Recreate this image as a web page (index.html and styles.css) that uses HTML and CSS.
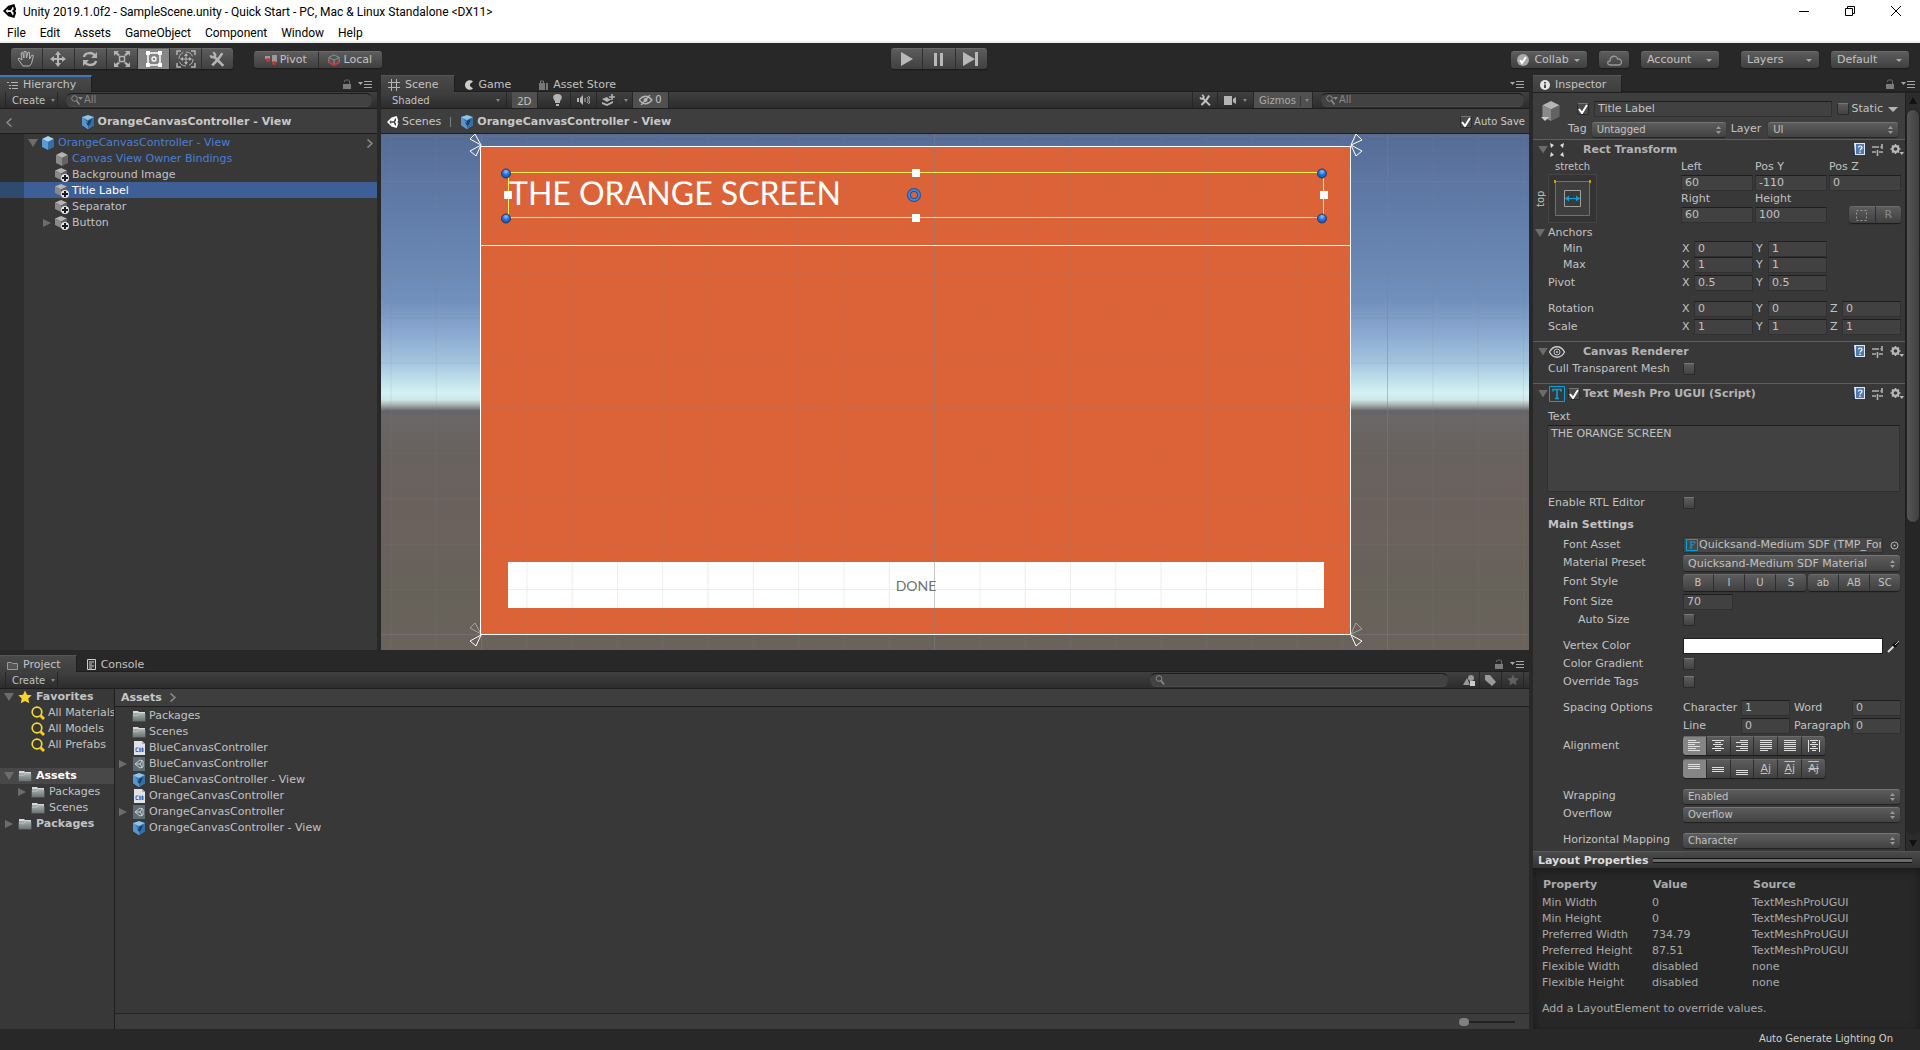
FILE: index.html
```html
<!DOCTYPE html>
<html lang="en">
<head>
<meta charset="utf-8">
<title>Unity 2019.1.0f2 - SampleScene.unity - Quick Start</title>
<link rel="stylesheet" href="styles.css">
</head>
<body>
<svg class="defs" aria-hidden="true">
  <defs>
    <linearGradient id="folderFill" x1="0" y1="0" x2="0" y2="1"><stop offset="0" stop-color="#a3adad"/><stop offset="1" stop-color="#66716f"/></linearGradient>
    <radialGradient id="knob" cx=".5" cy=".3" r=".7"><stop offset="0" stop-color="#8fc4ff"/><stop offset=".5" stop-color="#1e74e8"/><stop offset="1" stop-color="#0a4fb8"/></radialGradient>
    <pattern id="gridFine" x="9.5" y="2" width="45.3" height="45.3" patternUnits="userSpaceOnUse"><path d="M0.5 0v45.3M0 0.5h45.3" stroke="#808080" stroke-opacity=".15" fill="none"/></pattern>
  </defs>
  <symbol id="unity" viewBox="0 0 16 16"><path fill="currentColor" fill-rule="evenodd" d="M0 8 6 2l7-2 2 6-1 2 1 2-2 6-7-2zM3 8l3.500 3.500L5 9h4l2 4 1-1V9.500l-2-1.500 2-1.500V4l-1-1-2 4H5l1.500-2.500z"/></symbol>
  <symbol id="cube" viewBox="0 0 14 14"><path fill="#b4b4b4" d="m7 0 6 3-6 3-6-3z"/><path fill="#8a8a8a" d="m1 3 6 3v8l-6-3z"/><path fill="#636363" d="m13 3-6 3v8l6-3z"/></symbol>
  <symbol id="cubeAdd" viewBox="0 0 14 14"><path fill="#b4b4b4" d="m6 0 6 2.500-6 3-6-3z"/><path fill="#8a8a8a" d="m0 2.500 6 3V12L0 9z"/><path fill="#636363" d="m12 2.500-6 3V12l6-3z"/><circle cx="10" cy="10" r="4" fill="#e6e6e6"/><path d="M10 7v6M7 10h6" stroke="#1c1c1c" stroke-width="2"/></symbol>
  <symbol id="cubeBlue" viewBox="0 0 14 14"><path fill="#a9d4f4" d="m7 0 6 3-6 3-6-3z"/><path fill="#5b9ad2" d="m1 3 6 3v8l-6-3z"/><path fill="#356fa8" d="m13 3-6 3v8l6-3z"/></symbol>
  <symbol id="prefab" viewBox="0 0 14 14"><path fill="#8fc3ea" d="m7 0 6 2v8l-6 4-6-4V2z"/><path fill="#5795cc" d="m1 2 6 3v9l-6-4z"/><path fill="#356fa8" d="m13 2-6 3v9l6-4z"/><path fill="#173f66" d="m3 4 4 2 4-2-2 5-2 2-2-4 2 1V7z"/></symbol>
  <symbol id="folder" viewBox="0 0 14 12"><path fill="#d5dada" d="M1 3V1h5l1 1h6v2H1z"/><path fill="url(#folderFill)" stroke="#454d4d" stroke-width=".7" d="M.5 4h13v7.500H.5z"/><path stroke="#c5cccc" d="M1 5h5l1-1h6" fill="none"/></symbol>
  <symbol id="lens" viewBox="0 0 14 14"><circle cx="6" cy="6" r="4.800" fill="none" stroke="#f7d838" stroke-width="1.700"/><path d="m9.500 9.500 3.500 3.500" stroke="#f7c91a" stroke-width="3"/></symbol>
  <symbol id="star" viewBox="0 0 14 14"><path fill="currentColor" d="m7 .5 2 4.200 4.700.6-3.400 3.200.9 4.700L7 10.900l-4.200 2.300.9-4.700L.3 5.300 5 4.700z"/></symbol>
  <symbol id="csharp" viewBox="0 0 12 14"><path fill="#dfe3e8" d="M1 0h8l3 3v11H1z"/><path fill="#aab" d="M9 0v3h3z"/><path d="M5.500 7H3v3.500h2.500M7 6.500v4.500M9.500 6.500v4.500M6 8h5M6 10h5" stroke="#3d6bc4" fill="none"/></symbol>
  <symbol id="scriptable" viewBox="0 0 12 14"><path fill="#5c6c72" d="M0 0h12v14H0z"/><path fill="none" stroke="#c9d0d3" d="M2 7l5-4 3 1v6l-3 1zM2 7h5l2-3M7 7l2 3"/></symbol>
  <symbol id="lock" viewBox="0 0 8 10"><path fill="#7c7c7c" d="M0 5h8v5H0z"/><path fill="none" stroke="#6c6c6c" d="M1.500 3V2l1-1h3l1 1v3"/></symbol>
  <symbol id="menu" viewBox="0 0 14 8"><path fill="#a8a8a8" d="M0 2h5L2.500 5z"/><path stroke="#a8a8a8" d="M6 1.500h8M6 4.500h8M6 7.500h8"/></symbol>
  <symbol id="tools" viewBox="0 0 16 16"><path d="M4 4.500 13.500 14M12.500 2 8.500 8 3 13.500" stroke="currentColor" stroke-width="2.500" fill="none"/><path d="M1.500 4C2 7 6 6.500 6 3.500L4 1" stroke="currentColor" stroke-width="2" fill="none"/></symbol>
  <symbol id="find" viewBox="0 0 12 10"><circle cx="3.500" cy="3.500" r="2.800" fill="none" stroke="#8a8a8a"/><path d="m5.500 5.500 3 4" stroke="#8a8a8a" stroke-width="1.500"/><path fill="#8a8a8a" d="M7 2h5L9.500 5z"/></symbol>
  <symbol id="book" viewBox="0 0 13 13"><path fill="#1d3557" d="M0 1h3v12H0z"/><path fill="#dfe8f2" d="M1 0h11v12H2z"/><path fill="#4f78ad" d="M3 1h8v10H3z"/><path d="M5.500 4.500c0-2 3.500-2 3.500 0C9 6 7 6 7 7.500M7 8.500V10" stroke="#fff" stroke-width="1.200" fill="none"/></symbol>
  <symbol id="preset" viewBox="0 0 12 12"><path d="M0 3h7M0 8h4M7 8h4M10 0v5M5.500 6v6" stroke="#b0b0b0" stroke-width="1.600"/><path d="M8 3h2" stroke="#b0b0b0"/></symbol>
  <symbol id="gear" viewBox="0 0 14 12"><circle cx="5.500" cy="5" r="3" fill="none" stroke="#b8b8b8" stroke-width="2"/><path d="M5.500 0v10M.5 5h10M2 1.500l7 7M9 1.500l-7 7" stroke="#b8b8b8" stroke-width="1.500"/><circle cx="5.500" cy="5" r="1.800" fill="#383838"/><path fill="#b8b8b8" d="M9.500 8H14l-2.200 3z"/></symbol>
</svg>

<header class="titlebar">
  <svg width="14" height="14"><use href="#unity"/></svg>
  <h1>Unity 2019.1.0f2 - SampleScene.unity - Quick Start - PC, Mac &amp; Linux Standalone &lt;DX11&gt;</h1>
  <div class="window-buttons">
    <button aria-label="Minimize"><svg width="10" height="10"><path d="M0 5.500h10" stroke="#000"/></svg></button>
    <button aria-label="Restore"><svg width="10" height="10"><path d="M.5 2.500h7v7h-7zM2.500 2V.5h7v7H8" fill="none" stroke="#000"/></svg></button>
    <button aria-label="Close"><svg width="10" height="10"><path d="m0 0 10 10M10 0 0 10" stroke="#000"/></svg></button>
  </div>
</header>
<nav class="menubar">
  <a href="#file">File</a><a href="#edit">Edit</a><a href="#assets">Assets</a><a href="#gameobject">GameObject</a><a href="#component">Component</a><a href="#window">Window</a><a href="#help">Help</a>
</nav>

<div class="toolbar">
  <div class="segment tools">
    <button aria-label="Hand"><svg width="18" height="18" viewBox="0 0 18 18"><path d="M6 16 1 9l1-1 3 2-1-7 1.500-.5L7 8l0-6.500h2L9.500 8 11 2l1.500.5L12.500 9 15 5l1.500.5-2 8-2 2.500z" fill="none" stroke="#b4b4b4"/></svg></button>
    <button aria-label="Move"><svg width="16" height="16" viewBox="0 0 16 16"><path d="M8 2v12M2 8h12" stroke="#b4b4b4" stroke-width="2"/><path fill="#b4b4b4" d="m8 0 3 4H5zM8 16l3-4H5zM0 8l4-3v6zM16 8l-4-3v6z"/></svg></button>
    <button aria-label="Rotate"><svg width="16" height="16" viewBox="0 0 16 16"><path d="M2 6c1-5 9-5 11-1M14 10c-1 5-9 5-11 1" stroke="#b4b4b4" stroke-width="2.500" fill="none"/><path fill="#b4b4b4" d="M15 1v6H9zM1 15V9h6z"/></svg></button>
    <button aria-label="Scale"><svg width="18" height="16" viewBox="0 0 18 16"><path d="M6.500 5.500h5v5h-5z" fill="none" stroke="#b4b4b4" stroke-width="1.500"/><path fill="#b4b4b4" d="M1 0h5L4.500 1.500 7 4 5 5 2.500 3 1 5zM17 0h-5l1.500 1.500L11 4l2 1 2.500-2L17 5zM1 16h5l-1.500-1.500L7 12l-2-1-2.500 2L1 11zM17 16h-5l1.500-1.500L11 12l2-1 2.500 2 1.500-2z"/></svg></button>
    <button class="on" aria-label="Rect"><svg width="18" height="18" viewBox="0 0 18 18"><path d="M3 3h12v12H3z" fill="none" stroke="#fff" stroke-width="1.500"/><path fill="#fff" d="M1 1h4v4H1zM13 1h4v4h-4zM1 13h4v4H1zM13 13h4v4h-4z"/><circle cx="9" cy="9" r="2" fill="none" stroke="#fff" stroke-width="1.300"/></svg></button>
    <button aria-label="Transform"><svg width="20" height="18" viewBox="0 0 20 18"><path d="M1 5V1h4M15 1h4v4M1 13v4h4M15 17h4v-4" fill="none" stroke="#b4b4b4" stroke-width="1.500"/><circle cx="10" cy="9" r="7" fill="none" stroke="#b4b4b4" stroke-dasharray="8 3"/><path d="M10 4v10M5 9h10" stroke="#b4b4b4"/><path fill="#b4b4b4" d="m10 3 2 3H8zM10 15l2-3H8zM4 9l3-2v4zM16 9l-3-2v4z"/></svg></button>
    <button aria-label="Custom tools"><svg width="17" height="17"><use href="#tools"/></svg></button>
  </div>
  <div class="segment pivot">
    <button><svg width="12" height="10" viewBox="0 0 12 10"><path fill="#999" d="M0 1h5v3H0zM7 0h5v7H7z"/><circle cx="3" cy="5" r="2" fill="#c33"/><circle cx="9" cy="8" r="2" fill="#c33"/></svg>Pivot</button>
    <button><svg width="12" height="12" viewBox="0 0 14 14"><path fill="#555" stroke="#999" d="m7 1 6 3v6l-6 3-6-3V4zM1 4l6 3 6-3M7 7v6"/><path stroke="#c33" stroke-width="2" fill="none" d="m1 9 6 4 6-4"/></svg>Local</button>
  </div>
  <div class="segment play">
    <button aria-label="Play"><svg width="12" height="14"><path fill="#b8b8b8" d="m0 0 12 7-12 7z"/></svg></button>
    <button aria-label="Pause"><svg width="9" height="13"><path fill="#b8b8b8" d="M0 0h3v13H0zM6 0h3v13H6z"/></svg></button>
    <button aria-label="Step"><svg width="16" height="14"><path fill="#b8b8b8" d="m0 0 12 7-12 7zM12 0h3v14h-3z"/></svg></button>
  </div>
  <div class="account">
    <button class="pill collab"><svg width="12" height="12" viewBox="0 0 12 12"><circle cx="6" cy="6" r="6" fill="#a8a8a8"/><path d="m3 6 2 3 4-6" stroke="#fff" stroke-width="2" fill="none"/></svg>Collab<i class="caret"></i></button>
    <button class="pill cloud" aria-label="Services"><svg width="15" height="11" viewBox="0 0 15 11"><path d="M3 10C0 10 0 6 3 6c0-6 7-6 7.500-2 5-1 5 6 1.500 6z" fill="none" stroke="#999" stroke-width="1.300"/></svg></button>
    <button class="pill acct">Account<i class="caret"></i></button>
    <button class="pill menu-gap">Layers<i class="caret"></i></button>
    <button class="pill">Default<i class="caret"></i></button>
  </div>
</div>

<main class="editor">
  <div class="workspace">
    <div class="upper">
      <section class="panel hierarchy">
        <div class="tabs">
          <button class="tab on focus"><svg width="11" height="9" viewBox="0 0 11 9"><path d="M0 1.500h2M4 1.500h7M2 4.500h2M5 4.500h6M2 7.500h2M5 7.500h6" stroke="#b4b4b4"/></svg>Hierarchy</button>
          <span class="tab-tools"><svg width="8" height="10"><use href="#lock"/></svg><svg width="14" height="8"><use href="#menu"/></svg></span>
        </div>
        <div class="bar">
          <button class="bar-btn create">Create<i class="caret small"></i></button>
          <label class="search"><svg width="12" height="10"><use href="#find"/></svg><input type="text" placeholder="All" aria-label="Search hierarchy"></label>
        </div>
        <div class="crumbs centered">
          <svg class="back" width="6" height="9"><path d="M5.500.5 1 4.500l4.500 4" fill="none" stroke="#8e8e8e" stroke-width="1.500"/></svg>
          <svg width="14" height="14"><use href="#prefab"/></svg><b>OrangeCanvasController - View</b>
        </div>
        <ul class="tree scene-tree">
          <li class="blue"><i class="fold open"></i><svg width="14" height="14"><use href="#cubeBlue"/></svg>OrangeCanvasController - View<svg class="next" width="6" height="9"><path d="M.5.5 5 4.500l-4.500 4" fill="none" stroke="#8e8e8e" stroke-width="1.500"/></svg></li>
          <li class="blue deep"><i class="fold"></i><svg width="14" height="14"><use href="#cube"/></svg>Canvas View Owner Bindings</li>
          <li class="deep"><i class="fold"></i><svg width="14" height="14"><use href="#cubeAdd"/></svg>Background Image</li>
          <li class="deep selected"><i class="fold"></i><svg width="14" height="14"><use href="#cubeAdd"/></svg>Title Label</li>
          <li class="deep"><i class="fold"></i><svg width="14" height="14"><use href="#cubeAdd"/></svg>Separator</li>
          <li class="deep"><i class="fold shut"></i><svg width="14" height="14"><use href="#cubeAdd"/></svg>Button</li>
        </ul>
      </section>

      <section class="panel scene">
        <div class="tabs">
          <button class="tab on"><svg width="12" height="12" viewBox="0 0 12 12"><path d="M3.500 0v12M8.500 0v12M0 3.500h12M0 8.500h12" stroke="#b4b4b4"/></svg>Scene</button>
          <button class="tab game"><svg width="9" height="10" viewBox="0 0 9 10"><path fill="#ccc" d="M8 1.500 5 4v2l3 2.500C5 11.500 0 9 0 5s5-6.500 8-3.500z"/></svg>Game</button>
          <button class="tab store"><svg width="9" height="10" viewBox="0 0 9 10"><path fill="#777" d="M0 3h6v7H0zM7 3h2v7H7z"/><path d="M1.500 3V1h3v2" stroke="#777" fill="none"/></svg>Asset Store</button>
          <span class="tab-tools"><svg width="14" height="8"><use href="#menu"/></svg></span>
        </div>
        <div class="bar">
          <button class="bar-btn shaded">Shaded<i class="caret small"></i></button>
          <button class="bar-btn lit two-d">2D</button>
          <button class="bar-btn tool" aria-label="Lighting"><svg width="9" height="12" viewBox="0 0 9 12"><path fill="#b4b4b4" d="M4.500 0C10 0 9.500 5 7 7v2H2V7C-.5 5-1 0 4.500 0zM3 10h3v2H3z"/></svg></button>
          <button class="bar-btn tool" aria-label="Audio"><svg width="13" height="10" viewBox="0 0 13 10"><path fill="#b4b4b4" d="M0 3h2v4H0zM3 3l3-3v10L3 7z"/><path d="M8 3v4M10 2c1.500 2 1.500 4 0 6M11.500 1c2 2.500 2 5.500 0 8" stroke="#b4b4b4" fill="none"/></svg></button>
          <button class="bar-btn wide" aria-label="Effects"><svg width="13" height="12" viewBox="0 0 13 12"><path fill="#b4b4b4" d="m0 5 5-2 2 2 3 0-5 3zM0 8l5 2 6-3v2l-6 3-5-2z"/><path d="M10 0v6M7 3h6" stroke="#b4b4b4" stroke-width="1.500"/></svg><i class="divider"></i><i class="caret small"></i></button>
          <button class="bar-btn lit wide hidden-count"><svg width="14" height="10" viewBox="0 0 14 10"><path d="M0 5c4-5 9-5 13 0-4 5-9 5-13 0zM2 10 11 0" fill="none" stroke="#b4b4b4" stroke-width="1.300"/><circle cx="6.500" cy="5" r="2" fill="#b4b4b4"/></svg>0</button>
          <span class="spacer"></span>
          <button class="bar-btn tool first" aria-label="Tools"><svg width="13" height="13"><use href="#tools"/></svg></button>
          <button class="bar-btn wide cam" aria-label="Camera"><svg width="13" height="9"><path fill="#b4b4b4" d="M0 0h8v9H0zM9 3l3-2v7L9 6z"/></svg><i class="caret small"></i></button>
          <button class="bar-btn lit gizmos">Gizmos<i class="divider"></i><i class="caret small"></i></button>
          <label class="search scene-search"><svg width="12" height="10"><use href="#find"/></svg><input type="text" placeholder="All" aria-label="Search scene"></label>
        </div>
        <div class="crumbs">
          <svg class="scene-icon" width="12" height="12"><use href="#unity"/></svg><span>Scenes</span><i class="pipe"></i>
          <svg width="14" height="14"><use href="#prefab"/></svg><b>OrangeCanvasController - View</b>
          <label class="autosave"><input type="checkbox" checked>Auto Save</label>
        </div>
        <div class="viewport">
          <div class="artboard">
            <h2>THE ORANGE SCREEN</h2>
            <button class="done">DONE</button>
          </div>
          <svg class="overlay" width="100%" height="100%">
            <rect width="100%" height="100%" fill="url(#gridFine)"/>
            <path d="M553.500 0v2000M100.500 0v2000M1006.500 0v2000M0 47.500h4000M0 500.500h4000" stroke="#808080" stroke-opacity=".35"/>
            <path d="M99.500 12.500h870v488h-870zM99 111.500h871" fill="none" stroke="#fff"/>
            <path d="M127.500 38.500h815v45h-815z" fill="none" stroke="#f6f060"/>
            <g fill="none" stroke="#fff">
              <path d="m100 11-6-11-5 5zM100 11l-11 6 6 5zM970 11l5-11 6 6zM970 11l11 6-6 5z"/>
              <path d="m100 501-11 6 6 5zM970 501l11 6-6 5z"/>
              <path stroke-opacity=".4" d="m100 500-6-11-5 5zM970 500l5-11 6 6z"/>
            </g>
            <g fill="#fff"><path d="M123 57h8v8h-8zM939 57h8v8h-8zM531 35h8v8h-8zM531 80h8v8h-8z"/></g>
            <g fill="url(#knob)" stroke="#3a3540"><circle cx="125" cy="39.500" r="4.500"/><circle cx="125" cy="84.500" r="4.500"/><circle cx="941" cy="39.500" r="4.500"/><circle cx="941" cy="84.500" r="4.500"/></g>
            <circle cx="533" cy="61" r="5" fill="none" stroke="#2d4f86" stroke-width="4"/><circle cx="533" cy="61" r="5" fill="none" stroke="#3b86e8" stroke-width="2"/>
          </svg>
        </div>
      </section>
    </div>

    <section class="panel project">
      <div class="tabs">
        <button class="tab on"><svg width="11" height="9" viewBox="0 0 11 9"><path d="M.5 8.500v-7h4l1 1h5v6z" fill="#555" stroke="#999"/></svg>Project</button>
        <button class="tab console"><svg width="9" height="11" viewBox="0 0 9 11"><path fill="#333" stroke="#ccc" d="M.5.500h8v10h-8z"/><path d="M2 3h5M2 5h3M2 7h5M2 9h3" stroke="#ccc"/></svg>Console</button>
        <span class="tab-tools"><svg width="8" height="10"><use href="#lock"/></svg><svg width="14" height="8"><use href="#menu"/></svg></span>
      </div>
      <div class="bar">
        <button class="bar-btn create">Create<i class="caret small"></i></button>
        <span class="spacer"></span>
        <label class="search project-search"><svg width="12" height="10" viewBox="0 0 12 10"><circle cx="4" cy="3.500" r="2.800" fill="none" stroke="#8a8a8a"/><path d="m6 5.500 3 4" stroke="#8a8a8a" stroke-width="1.500"/></svg><input type="text" aria-label="Search project"></label>
        <div class="filters">
          <button class="bar-btn filter" aria-label="Filter by type"><svg width="12" height="11"><path fill="#999" d="m0 10 4-7 3 7z"/><circle cx="8" cy="3" r="3" fill="#999"/><path fill="#ccc" d="M7 6h5v5H7z"/></svg></button>
          <button class="bar-btn filter" aria-label="Filter by label"><svg width="11" height="11"><path fill="#999" d="M0 0h5l6 7-4 4-7-6z"/></svg></button>
          <button class="bar-btn filter" aria-label="Favorite"><svg class="dim-star" width="12" height="12"><use href="#star"/></svg></button>
        </div>
      </div>
      <div class="project-body">
        <ul class="tree folders">
          <li class="top"><i class="fold open"></i><svg class="gold" width="14" height="14"><use href="#star"/></svg><b>Favorites</b></li>
          <li class="sub"><svg width="14" height="14"><use href="#lens"/></svg>All Materials</li>
          <li class="sub"><svg width="14" height="14"><use href="#lens"/></svg>All Models</li>
          <li class="sub"><svg width="14" height="14"><use href="#lens"/></svg>All Prefabs</li>
          <li class="top current"><i class="fold open"></i><svg width="14" height="12"><use href="#folder"/></svg><b>Assets</b></li>
          <li class="mid"><i class="fold shut"></i><svg width="14" height="12"><use href="#folder"/></svg>Packages</li>
          <li class="mid"><i class="fold"></i><svg width="14" height="12"><use href="#folder"/></svg>Scenes</li>
          <li class="top"><i class="fold shut"></i><svg width="14" height="12"><use href="#folder"/></svg><b>Packages</b></li>
        </ul>
        <div class="files">
          <div class="crumbs path"><b>Assets</b><svg width="6" height="9"><path d="M.5.500 5 4.500l-4.500 4" fill="none" stroke="#8e8e8e" stroke-width="1.500"/></svg></div>
          <ul class="tree list">
            <li><i class="fold"></i><svg width="14" height="12"><use href="#folder"/></svg>Packages</li>
            <li><i class="fold"></i><svg width="14" height="12"><use href="#folder"/></svg>Scenes</li>
            <li><i class="fold"></i><svg width="14" height="14"><use href="#csharp"/></svg>BlueCanvasController</li>
            <li><i class="fold shut"></i><svg width="14" height="14"><use href="#scriptable"/></svg>BlueCanvasController</li>
            <li><i class="fold"></i><svg width="14" height="14"><use href="#prefab"/></svg>BlueCanvasController - View</li>
            <li><i class="fold"></i><svg width="14" height="14"><use href="#csharp"/></svg>OrangeCanvasController</li>
            <li><i class="fold shut"></i><svg width="14" height="14"><use href="#scriptable"/></svg>OrangeCanvasController</li>
            <li><i class="fold"></i><svg width="14" height="14"><use href="#prefab"/></svg>OrangeCanvasController - View</li>
          </ul>
          <div class="zoombar"><input type="range" min="0" max="100" value="0" aria-label="Icon size"></div>
        </div>
      </div>
    </section>
  </div>

  <aside class="panel inspector">
    <div class="tabs">
      <button class="tab on"><svg width="10" height="10" viewBox="0 0 10 10"><circle cx="5" cy="5" r="5" fill="#e4e4e4"/><path d="M5 2v1.500M5 4.500V8" stroke="#222" stroke-width="1.600"/></svg>Inspector</button>
      <span class="tab-tools"><svg width="8" height="10"><use href="#lock"/></svg><svg width="14" height="8"><use href="#menu"/></svg></span>
    </div>
    <div class="inspector-body">
      <div class="properties">
        <div class="object">
          <svg class="object-icon" width="22" height="22" viewBox="0 0 22 22"><use href="#cube" width="22" height="20"/><path fill="#ccc" d="M1 16h8l-4 4z"/></svg>
          <div class="object-lines">
            <div class="object-line"><input type="checkbox" checked aria-label="Active"><input class="name" type="text" value="Title Label" aria-label="Name"><label class="static"><input type="checkbox">Static</label><i class="caret big"></i></div>
            <div class="object-line second"><label for="tag">Tag</label><select id="tag" class="tag"><option>Untagged</option></select><label for="layer">Layer</label><select id="layer" class="layer"><option>UI</option></select></div>
          </div>
        </div>

        <section class="component">
          <header><i class="fold open"></i><svg class="kind" width="16" height="14" viewBox="0 0 16 14"><path fill="#ddd" d="m1 0 4 2-3 3zM15 0l-4 2 3 3zM1 14l4-2-3-3zM15 14l-4-2 3-3z"/></svg><h3>Rect Transform</h3><svg width="13" height="13"><use href="#book"/></svg><svg width="12" height="12"><use href="#preset"/></svg><svg width="14" height="12"><use href="#gear"/></svg></header>
          <div class="rect">
            <div class="anchor">
              <span class="anchor-x">stretch</span><span class="anchor-y">top</span>
              <svg width="49" height="49"><path d="M.5.500h48v48H.5z" fill="#343434" stroke="#444"/><path d="M7.500 7.500h34v34h-34z" fill="#3e3e3e" stroke="#707070"/><path d="M7 7.500h35" stroke="#c05050"/><path d="M16.500 16.500h16v16h-16z" fill="#3a3a3a" stroke="#a0a0a0"/><path d="M17 24.500h15" stroke="#0aa0dc"/><path fill="#0aa0dc" d="m17 24.500 4-3v6zM32 24.500l-4-3v6z"/><path fill="#d29c00" d="M6 6h2v3H6zM41 6h2v3h-2z"/></svg>
            </div>
            <div class="rect-fields">
              <label>Left<input type="text" value="60"></label><label>Pos Y<input type="text" value="-110"></label><label>Pos Z<input type="text" value="0"></label>
              <label>Right<input type="text" value="60"></label><label>Height<input type="text" value="100"></label>
              <div class="segment rect-mode"><button aria-label="Blueprint mode"><svg width="11" height="11"><path d="M.5.500h10v10H.5z" fill="none" stroke="#999" stroke-dasharray="2 2"/></svg></button><button>R</button></div>
            </div>
          </div>
          <div class="row"><i class="fold open outdent"></i><span>Anchors</span></div>
          <div class="row in1"><span>Min</span><div class="xyz"><label>X<input type="text" value="0"></label><label>Y<input type="text" value="1"></label></div></div>
          <div class="row in1"><span>Max</span><div class="xyz"><label>X<input type="text" value="1"></label><label>Y<input type="text" value="1"></label></div></div>
          <div class="row near"><span>Pivot</span><div class="xyz"><label>X<input type="text" value="0.5"></label><label>Y<input type="text" value="0.5"></label></div></div>
          <div class="row far"><span>Rotation</span><div class="xyz"><label>X<input type="text" value="0"></label><label>Y<input type="text" value="0"></label><label>Z<input type="text" value="0"></label></div></div>
          <div class="row near"><span>Scale</span><div class="xyz"><label>X<input type="text" value="1"></label><label>Y<input type="text" value="1"></label><label>Z<input type="text" value="1"></label></div></div>
        </section>

        <section class="component">
          <header><i class="fold open"></i><svg class="kind" width="16" height="12" viewBox="0 0 16 12"><path d="M.5 6c4-7 11-7 15 0-4 7-11 7-15 0z" fill="none" stroke="#ccc" stroke-width="1.300"/><circle cx="8" cy="6" r="3" fill="none" stroke="#ccc"/><circle cx="8" cy="6" r="1" fill="#ccc"/></svg><h3>Canvas Renderer</h3><svg width="13" height="13"><use href="#book"/></svg><svg width="12" height="12"><use href="#preset"/></svg><svg width="14" height="12"><use href="#gear"/></svg></header>
          <div class="row"><label for="cull">Cull Transparent Mesh</label><input id="cull" type="checkbox"></div>
        </section>

        <section class="component">
          <header><i class="fold open"></i><svg class="kind" width="16" height="16"><path d="M.5.500h15v15H.5z" fill="none" stroke="#0aa0dc"/><path d="M4 5.500V3.500h8v2M8 3.500v9M6 12.500h4" stroke="#0aa0dc" stroke-width="1.600" fill="none"/></svg><input type="checkbox" checked aria-label="Enabled"><h3>Text Mesh Pro UGUI (Script)</h3><svg width="13" height="13"><use href="#book"/></svg><svg width="12" height="12"><use href="#preset"/></svg><svg width="14" height="12"><use href="#gear"/></svg></header>
          <div class="row mid"><label for="text">Text</label></div>
          <textarea id="text">THE ORANGE SCREEN</textarea>
          <div class="row tight"><label for="rtl">Enable RTL Editor</label><input id="rtl" type="checkbox"></div>
          <div class="row mid"><b>Main Settings</b></div>
          <div class="row in1 snug"><label for="font">Font Asset</label><div class="asset"><svg width="12" height="12"><path d="M.5.500h11v11H.5z" fill="none" stroke="#0aa0dc"/><path d="M5 3v6M3.500 9h3M3.500 3H9v1.500M5 6h3" stroke="#0aa0dc" fill="none"/></svg><input id="font" type="text" value="Quicksand-Medium SDF (TMP_FontAsset)" readonly></div><svg class="picker" width="9" height="9"><circle cx="4.500" cy="4.500" r="3.500" fill="none" stroke="#bbb"/><circle cx="4.500" cy="4.500" r="1" fill="#bbb"/></svg></div>
          <div class="row in1 near"><label for="material">Material Preset</label><select id="material" class="plain"><option>Quicksand-Medium SDF Material</option></select></div>
          <div class="row in1 tight"><span>Font Style</span><div class="styles"><div class="segment"><button>B</button><button>I</button><button>U</button><button>S</button></div><div class="segment"><button>ab</button><button>AB</button><button>SC</button></div></div></div>
          <div class="row in1 snug"><label for="size">Font Size</label><input id="size" class="short" type="text" value="70"></div>
          <div class="row in2 near"><label for="auto">Auto Size</label><input id="auto" type="checkbox"></div>
          <div class="row in1 far"><span>Vertex Color</span><button class="swatch" aria-label="Vertex color"></button><svg class="dropper" width="13" height="13"><path d="m1 12 6-6" stroke="#ddd" stroke-width="2"/><path d="m6 4 3 3M7 6l4-4" stroke="#111" stroke-width="3"/><path d="m8 5 4-4" stroke="#ccc" stroke-width="1"/></svg></div>
          <div class="row in1 near"><label for="grad">Color Gradient</label><input id="grad" type="checkbox"></div>
          <div class="row in1 near"><label for="over">Override Tags</label><input id="over" type="checkbox"></div>
          <div class="row in1 far"><span>Spacing Options</span><div class="spacing"><label>Character<input type="text" value="1"></label><label>Word<input type="text" value="0"></label></div></div>
          <div class="row in1 near"><span></span><div class="spacing"><label>Line<input type="text" value="0"></label><label>Paragraph<input type="text" value="0"></label></div></div>
          <div class="row in1 near tall"><span>Alignment</span>
            <div class="segment align">
              <button class="on" aria-label="Left"><svg width="12" height="12"><path d="M0 .5h8M0 2.500h12M0 4.500h7M0 6.500h12M0 8.500h8M0 10.500h12"/></svg></button>
              <button aria-label="Center"><svg width="12" height="12"><path d="M0 .5h12M3 2.500h6M1 4.500h10M3 6.500h6M0 8.500h12M3 10.500h6"/></svg></button>
              <button aria-label="Right"><svg width="12" height="12"><path d="M4 .5h8M0 2.500h12M5 4.500h7M0 6.500h12M4 8.500h8M0 10.500h12"/></svg></button>
              <button aria-label="Justified"><svg width="12" height="12"><path d="M0 .5h12M0 2.500h12M0 4.500h12M0 6.500h12M0 8.500h12M0 10.500h8"/></svg></button>
              <button aria-label="Flush"><svg width="12" height="12"><path d="M0 .5h12M0 2.500h12M0 4.500h12M0 6.500h12M0 8.500h12M0 10.500h12"/></svg></button>
              <button aria-label="Geometry center"><svg width="12" height="12"><path d="M.5 0v12M11.500 0v12M2 .5h8M4 2.500h4M2 4.500h8M4 6.500h4M2 8.500h8M4 10.500h4"/></svg></button>
            </div></div>
          <div class="row in1 snug tall"><span></span>
            <div class="segment align">
              <button class="on" aria-label="Top"><svg width="12" height="12"><path d="M0 1.500h12M0 3.500h12M0 5.500h12"/></svg></button>
              <button aria-label="Middle"><svg width="12" height="12"><path d="M0 4.500h12M0 6.500h12M0 8.500h12"/></svg></button>
              <button aria-label="Bottom"><svg width="12" height="12"><path d="M0 7.500h12M0 9.500h12M0 11.500h12"/></svg></button>
              <button aria-label="Baseline"><span>Aj</span></button>
              <button aria-label="Midline"><span class="lines">Aj</span></button>
              <button aria-label="Capline"><span class="over">Aj</span></button>
            </div></div>
          <div class="row in1 far"><label for="wrap">Wrapping</label><select id="wrap"><option>Enabled</option></select></div>
          <div class="row in1 near"><label for="flow">Overflow</label><select id="flow"><option>Overflow</option></select></div>
          <div class="row in1 far"><label for="hmap">Horizontal Mapping</label><select id="hmap"><option>Character</option></select></div>
          <div class="row in1 near"><span></span><select aria-label="Vertical Mapping"></select></div>
        </section>
      </div>
      <div class="scrollbar"><svg width="8" height="7"><path d="M4 0 8 7H0z"/></svg><div class="track"><div class="thumb"></div></div><svg width="8" height="7"><path d="M0 0h8L4 7z"/></svg></div>
    </div>
    <div class="layout-title"><h3>Layout Properties</h3><i></i></div>
    <div class="layout-props">
      <table>
        <thead><tr><th>Property</th><th>Value</th><th>Source</th></tr></thead>
        <tbody>
          <tr><td>Min Width</td><td>0</td><td>TextMeshProUGUI</td></tr>
          <tr><td>Min Height</td><td>0</td><td>TextMeshProUGUI</td></tr>
          <tr><td>Preferred Width</td><td>734.79</td><td>TextMeshProUGUI</td></tr>
          <tr><td>Preferred Height</td><td>87.51</td><td>TextMeshProUGUI</td></tr>
          <tr><td>Flexible Width</td><td>disabled</td><td>none</td></tr>
          <tr><td>Flexible Height</td><td>disabled</td><td>none</td></tr>
        </tbody>
      </table>
      <p>Add a LayoutElement to override values.</p>
    </div>
  </aside>
</main>
<footer class="status">Auto Generate Lighting On</footer>
</body>
</html>
```
FILE: styles.css
```css
* { box-sizing: border-box; }
body {
  margin: 0;
  height: 100vh;
  display: flex;
  flex-direction: column;
  overflow: hidden;
  background: #282828;
  color: #c2c2c2;
  font: 11px/16px "DejaVu Sans", sans-serif;
}
button, input, select, textarea { font: inherit; color: inherit; margin: 0; border-radius: 0; }
button { padding: 0; border: 0; background: none; display: flex; align-items: center; justify-content: center; white-space: nowrap; }
h1, h2, h3, p, ul { margin: 0; padding: 0; font-size: inherit; }
ul { list-style: none; }
svg { flex: none; display: block; }
.defs { position: absolute; width: 0; height: 0; }
.spacer { flex: 1; }

/* Title bar and menu */
.titlebar { display: flex; align-items: center; flex: none; height: 22px; padding-left: 3px; background: #fff; color: #000; font-family: Roboto, sans-serif; font-size: 12px; }
.titlebar > svg { margin-right: 6px; }
.titlebar h1 { flex: 1; font-weight: 400; padding-top: 2px; }
.window-buttons { display: flex; }
.window-buttons button { width: 46px; height: 22px; padding-right: 2px; }
.menubar { display: flex; gap: 14px; flex: none; height: 21px; padding-left: 7px; background: #fff; border-bottom: 2px solid #f0f0f0; font: 12px/22px Roboto, sans-serif; }
.menubar a { color: #000; text-decoration: none; }

/* Main toolbar */
.toolbar { display: flex; flex: none; height: 32px; padding: 5px 11px 0; position: relative; }
.segment { display: flex; border-radius: 3px; overflow: hidden; box-shadow: 0 1px 1px #1b1b1b; }
.segment button { flex: 1; background: linear-gradient(#5c5c5c, #404040); border-right: 1px solid #2e2e2e; border-top: 1px solid #6a6a6a; }
.segment button:last-child { border-right: 0; }
.segment button.on { background: #858585; }
.tools { width: 222px; height: 21px; color: #b4b4b4; }
.pivot { width: 128px; height: 17px; margin: 3px 0 0 21px; }
.pivot svg { margin-right: 3px; }
.play { position: absolute; left: 50%; margin-left: -69px; width: 96px; height: 21px; }
.account { display: flex; margin: 3px 0 0 auto; height: 17px; }
.pill { width: 78px; height: 17px; justify-content: space-between; padding: 0 7px 0 6px; border-radius: 3px; background: linear-gradient(#5c5c5c, #404040); border-top: 1px solid #6a6a6a; box-shadow: 0 1px 1px #1b1b1b; }
.collab { width: 76px; }
.cloud { width: 30px; margin: 0 12px; justify-content: center; padding: 0; }
.acct { margin-right: 22px; }
.menu-gap { margin-right: 12px; }
.caret { width: 0; height: 0; border: 3px solid transparent; border-top-color: #aaa; border-bottom: 0; }
.caret.small { border-width: 3px 2px 0; border-top-color: #888; }
.caret.big { border-width: 5px 5px 0; border-top-color: #b4b4b4; }

/* Panels */
.editor { flex: 1; min-height: 0; display: flex; gap: 4px; }
.workspace { flex: 1; min-width: 0; display: flex; flex-direction: column; gap: 5px; }
.upper { flex: 1; min-height: 0; display: flex; gap: 4px; }
.panel { display: flex; flex-direction: column; min-width: 0; }
.hierarchy { width: 377px; }
.scene { flex: 1; }
.project { height: 374px; }
.inspector { width: 387px; }
.tabs { display: flex; flex: none; height: 17px; border-bottom: 1px solid #1e1e1e; }
.tab { height: 17px; padding: 2px 15px 0 7px; gap: 5px; }
.tab.on { background: linear-gradient(#4a4a4a, #3e3e3e); border-top: 1px solid #555; border-right: 1px solid #1e1e1e; }
.tab.focus { border-top: 2px solid #3b79bb; padding-top: 1px; }
.game, .console { padding-left: 10px; }
.store { padding-left: 13px; }
.tab-tools { display: flex; align-items: center; gap: 7px; margin-left: auto; padding: 2px 5px 0 0; }
.bar { display: flex; flex: none; height: 17px; padding-left: 5px; background: linear-gradient(#404040, #2c2c2c); border-bottom: 1px solid #1e1e1e; font-size: 10px; }
.bar-btn { height: 16px; padding: 1px 6px 0; border-right: 1px solid #262626; gap: 4px; }
.bar-btn.lit { background: #505050; }
.create { width: 53px; padding: 1px 2px 0 6px; justify-content: space-between; border-left: 1px solid #262626; }
.shaded { width: 121px; justify-content: space-between; margin-right: 5px; }
.two-d { width: 26px; padding: 0; font: 11px "Noto Sans", sans-serif; margin-right: 7px; }
.tool { width: 26px; padding: 0; }
.wide { width: 36px; padding: 0 3px; }
.hidden-count { gap: 2px; }
.first { border-left: 1px solid #262626; }
.cam { gap: 6px; }
.gizmos { width: 59px; padding: 1px 3px 0 5px; color: #aaa; }
.divider { width: 1px; height: 10px; background: #383838; }
.search { flex: 1; display: flex; align-items: center; gap: 1px; height: 14px; margin: 1px 4px 0 7px; padding-left: 5px; border-radius: 7px; background: #424242; border: 1px solid #1e1e1e; border-color: #1c1c1c #363636 #4a4a4a; }
.search input[type="text"] { flex: 1; height: 12px; padding: 0; border: 0; background: none; font-size: 10px; line-height: 12px; }
.search input::placeholder { color: #888; }
.scene-search { flex: none; width: 205px; }
.project-search { flex: none; width: 300px; margin-right: 9px; }
.filters { display: flex; padding-right: 5px; }
.filter { width: 22px; padding: 0; }
.dim-star { color: #606060; }
.crumbs { display: flex; align-items: center; flex: none; height: 25px; gap: 3px; padding: 2px 0 0 6px; background: #3e3e3e; border-bottom: 1px solid #1e1e1e; color: #c8c8c8; }
.crumbs.centered { justify-content: center; padding-right: 20px; }
.back { margin-right: auto; }
.centered b { margin-right: auto; }
.scene-icon { color: #fff; }
.pipe { width: 1px; height: 10px; margin: 0 6px; background: #808080; }
.autosave { display: flex; align-items: center; gap: 2px; margin-left: auto; padding-right: 4px; font-size: 10px; }

/* Trees */
.tree { white-space: nowrap; overflow: hidden; }
.tree li { display: flex; align-items: center; height: 16px; gap: 3px; }
.fold { width: 10px; height: 8px; flex: none; }
.fold.open { background: #6c6c6c; clip-path: polygon(0 0, 100% 0, 50% 100%); }
.fold.shut { background: #6c6c6c; clip-path: polygon(10% 0, 90% 50%, 10% 100%); }
.scene-tree { flex: 1; background: linear-gradient(90deg, #2e2e2e 24px, #383838 24px); }
.scene-tree li { padding: 2px 0 0 28px; }
.scene-tree li.deep { padding-left: 42px; }
.scene-tree .selected { background: linear-gradient(90deg, #304a6e 24px, #3e5f96 24px); color: #fff; }
.blue { color: #4a7fd6; }
.next { margin: 0 4px 0 auto; }

/* Scene viewport */
.viewport { flex: 1; position: relative; overflow: hidden; background: linear-gradient(#566c96 0, #6480ae 96px, #7190bb 166px, #88a6cf 196px, #a3c4de 228px, #bfe0ea 246px, #d4f2f4 259px, #cfe5e6 266px, #a5b0b0 271px, #646364 277px, #6a6768 282px, #68625f 316px, #6b615d 400px, #66625a 460px, #6b625d 516px); }
.artboard { position: absolute; left: 100px; top: 13px; width: 870px; height: 488px; background: #dc6338; }
.artboard h2 { position: absolute; left: 28px; top: 27px; color: #fff; font: 32px/38px Lato, sans-serif; white-space: nowrap; }
.done { position: absolute; left: 27px; top: 415px; width: 816px; height: 46px; background: #fff; color: #707070; font: 14px Lato, sans-serif; }
.overlay { position: absolute; inset: 0; pointer-events: none; }

/* Project */
.project-body { flex: 1; display: flex; min-height: 0; background: #383838; }
.folders { width: 115px; border-right: 1px solid #1e1e1e; }
.folders li { padding-left: 4px; gap: 4px; }
.folders li.sub { padding-left: 31px; gap: 3px; }
.folders li.mid { padding-left: 17px; }
.folders li.current { margin-top: 15px; background: #484848; color: #fff; }
.gold { color: #f8d52e; }
.files { flex: 1; display: flex; flex-direction: column; min-width: 0; }
.crumbs.path { height: 18px; gap: 8px; padding-top: 0; }
.list { flex: 1; padding-top: 1px; }
.list li { padding-left: 3px; gap: 3px; }
.list .fold { margin-right: 1px; }
.zoombar { flex: none; height: 16px; display: flex; justify-content: flex-end; align-items: center; padding-right: 14px; background: #3c3c3c; border-top: 1px solid #242424; }
input[type="range"] { appearance: none; width: 56px; height: 10px; background: linear-gradient(#222, #222) center / 100% 2px no-repeat; }
input[type="range"]::-webkit-slider-thumb { appearance: none; width: 10px; height: 8px; border-radius: 4px; background: #808080; }

/* Form controls */
input[type="text"], textarea { height: 16px; min-width: 0; padding: 0 3px; border: 1px solid #303030; border-top-color: #1e1e1e; background: #414141; outline: 0; }
input[type="checkbox"] { appearance: none; flex: none; width: 12px; height: 12px; border: 1px solid #2a2a2a; border-top-color: #777; border-radius: 2px; background: linear-gradient(#5c5c5c, #424242); }
input[type="checkbox"]:checked { background: url("data:image/svg+xml,%3Csvg xmlns='http://www.w3.org/2000/svg' viewBox='0 0 10 10'%3E%3Cpath d='M1 5l3 4 5-8' fill='none' stroke='%23fff' stroke-width='2'/%3E%3C/svg%3E") center / 10px no-repeat, #4a4a4a; }
select { appearance: none; min-width: 0; height: 15px; padding: 0 14px 0 5px; border: 0; border-top: 1px solid #757575; border-radius: 3px; box-shadow: 0 1px 1px #222; font-size: 10px; line-height: 14px; background: url("data:image/svg+xml,%3Csvg xmlns='http://www.w3.org/2000/svg' viewBox='0 0 5 8'%3E%3Cpath d='M0 3L2.500 0 5 3zM0 5h5L2.500 8z' fill='%23999'/%3E%3C/svg%3E") right 5px center / 5px 8px no-repeat, linear-gradient(#5c5c5c, #424242); }
select.plain { font-size: 11px; height: 16px; }

/* Inspector */
.inspector-body { flex: 1; min-height: 0; display: flex; border-top: 1px solid #222; }
.properties { flex: 1; min-width: 0; overflow: hidden; background: #383838; }
.object { display: flex; gap: 15px; height: 46px; padding: 8px 7px 0 7px; background: #3e3e3e; }
.object-lines { flex: 1; }
.object-line { display: flex; align-items: center; gap: 5px; height: 16px; }
.object-line.second { margin: 4px 0 0 -9px; }
.name { flex: 1; }
.static { display: flex; align-items: center; gap: 3px; }
.tag { width: 134px; }
.layer { flex: 1; margin-left: 2px; }
.component { border-top: 1px solid #5e5e5e; padding: 0 4px 6px 15px; }
.component header { display: flex; align-items: center; height: 19px; margin: 0 -3px 0 -10px; }
.component header h3 { flex: 1; white-space: nowrap; margin-left: 18px; padding-top: 1px; color: #b4b4b4; }
.component header input { margin-left: 3px; }
.component header input + h3 { margin-left: 3px; }
.component header svg + svg { margin-left: 6px; }
.component header .kind { margin-left: 1px; }
.rect { display: flex; justify-content: space-between; height: 66px; }
.anchor { display: grid; grid-template-columns: 0 49px; grid-template-rows: 15px 49px; }
.anchor-x { grid-column: 2; text-align: center; font-size: 10px; }
.anchor-y { grid-column: 1; writing-mode: vertical-rl; transform: rotate(180deg); text-align: center; font-size: 10px; line-height: 14px; justify-self: end; }
.rect-fields, .xyz { display: grid; grid-template-columns: repeat(3, 72px); column-gap: 2px; width: 220px; align-content: start; }
.rect-fields label { height: 32px; }
.rect-fields input { display: block; width: 72px; }
.rect-mode { align-self: end; justify-self: end; width: 52px; height: 17px; color: #888; }
.row { display: flex; align-items: center; height: 16px; white-space: nowrap; }
.row > :first-child:not(.fold) { width: 135px; flex: none; }
.row > .outdent { margin-left: -13px; margin-right: 3px; }
.row.in1 { padding-left: 15px; }
.row.in1 > :first-child { width: 120px; }
.row.in2 { padding-left: 30px; }
.row.in2 > :first-child { width: 105px; }
.row.near { margin-top: 2px; }
.row.tight { margin-top: 3px; }
.row.snug { margin-top: 4px; }
.row.mid { margin-top: 6px; }
.row.far { margin-top: 10px; }
.row.tall { height: 19px; }
.row select { width: 217px; }
.xyz { margin-left: -2px; }
.xyz label { display: flex; justify-content: space-between; padding-left: 1px; }
.xyz input { width: 59px; }
textarea { display: block; width: 100%; height: 67px; margin-left: -1px; resize: none; line-height: 16px; }
.asset { display: flex; align-items: center; width: 200px; height: 16px; padding-left: 2px; background: #484848; border: 1px solid #303030; }
.asset input[type="text"] { flex: 1; padding: 0 1px; border: 0; background: none; height: 14px; }
.picker { margin-left: 7px; }
.styles { display: flex; gap: 2px; width: 217px; height: 17px; font-size: 10px; }
.styles .segment:first-child { flex: 4; }
.styles .segment:last-child { flex: 3; }
.short { width: 50px; }
.swatch { width: 200px; height: 16px; background: #fff; border: 1px solid #1e1e1e; }
.dropper { margin-left: 4px; }
.spacing { display: flex; justify-content: space-between; width: 218px; }
.spacing label { display: flex; justify-content: space-between; width: 107px; }
.spacing input { width: 49px; flex: none; }
.align { width: 142px; height: 19px; }
.align path { stroke: #e0e0e0; fill: none; }
.align span { line-height: 12px; text-decoration: underline; }
.align .lines { text-decoration: underline overline; }
.align .over { text-decoration: line-through overline; }
.scrollbar { width: 15px; display: flex; flex-direction: column; align-items: center; gap: 5px; padding: 4px 0; background: #2c2c2c; border-left: 1px solid #1e1e1e; }
.scrollbar path { fill: #111; }
.track { flex: 1; width: 14px; border-radius: 7px; background: #262626; }
.thumb { height: 57%; border-radius: 7px; background: linear-gradient(90deg, #555, #404040); border: 1px solid #222; }
.layout-title { display: flex; align-items: center; flex: none; gap: 4px; height: 17px; padding: 1px 8px 0 5px; background: linear-gradient(#4a4a4a, #323232); border-top: 1px solid #555; color: #ddd; }
.layout-title i { flex: 1; height: 5px; border: solid #111; border-width: 1px 0; background: #6a6a6a; }
.layout-props { flex: none; height: 161px; padding: 9px 9px 0; background: #282828; box-shadow: inset 0 3px 10px #1a1a1a; color: #aaa; }
table { border-spacing: 0; }
th { text-align: left; padding: 0 0 2px 1px; }
td { padding: 0; }
th:nth-child(1) { width: 110px; }
th:nth-child(2) { width: 100px; }
.layout-props p { margin-top: 10px; }
.status { flex: none; height: 21px; padding-right: 27px; text-align: right; font-size: 10px; line-height: 20px; color: #d0d0d0; }
```
